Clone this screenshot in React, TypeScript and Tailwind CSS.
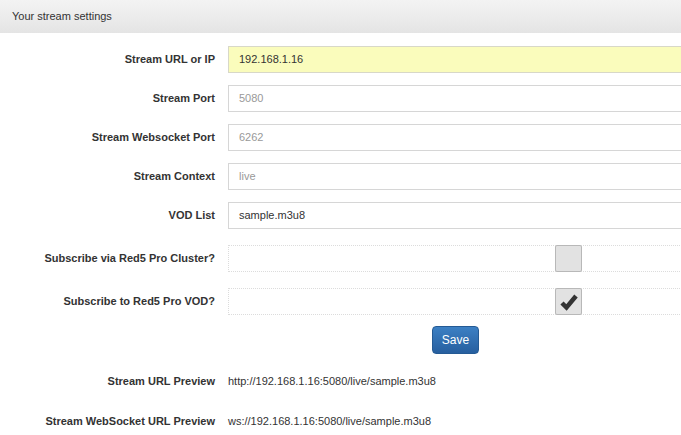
import React from "react";

const font = { fontFamily: '"Liberation Sans", Arial, sans-serif' };

function Label({ children }: { children: React.ReactNode }) {
  return (
    <div className="w-[215px] shrink-0 text-right text-[11px] font-bold text-[#333]">
      {children}
    </div>
  );
}

function InputRow({
  label,
  value,
  placeholder,
  yellow,
  mb,
}: {
  label: string;
  value?: string;
  placeholder?: string;
  yellow?: boolean;
  mb: string;
}) {
  return (
    <div className={`flex items-center gap-[13px] ${mb}`}>
      <Label>{label}</Label>
      <div
        className={`flex h-[27px] w-[460px] shrink-0 items-center border px-[10px] text-[11px] ${
          yellow ? "border-[#d8d8c8] bg-[#fafcbc]" : "border-[#d6d6d6] bg-white"
        } ${value ? "text-[#333]" : "text-[#999]"}`}
      >
        {value ?? placeholder}
      </div>
    </div>
  );
}

function CheckRow({ label, checked, mb }: { label: string; checked?: boolean; mb: string }) {
  return (
    <div className={`flex items-center gap-[13px] ${mb}`}>
      <Label>{label}</Label>
      <div className="flex h-[27px] w-[460px] shrink-0 items-center border border-dotted border-[#dcdcdc]">
        <div className="ml-[326px] flex h-[27px] w-[27px] items-center justify-center rounded-[2px] border border-[#b8b8b8] bg-[#e2e2e2]">
          {checked && (
            <svg width="22" height="22" viewBox="0 0 22 22">
              <polyline
                points="4,12 8.5,16.5 18,5"
                fill="none"
                stroke="#333"
                strokeWidth="4.5"
                strokeLinejoin="miter"
              />
            </svg>
          )}
        </div>
      </div>
    </div>
  );
}

function PreviewRow({ label, value, mb }: { label: string; value: string; mb: string }) {
  return (
    <div className={`flex h-[27px] items-center gap-[13px] ${mb}`}>
      <Label>{label}</Label>
      <div className="text-[11px] text-[#333]">{value}</div>
    </div>
  );
}

export default function App() {
  return (
    <div className="h-[435px] w-[681px] overflow-hidden bg-white" style={font}>
      <div className="flex h-[33px] items-center bg-gradient-to-b from-[#f3f3f3] via-[#ececec] to-[#e4e4e4] pl-[12px] text-[11px] text-[#333]">
        Your stream settings
      </div>
      <div className="pt-[13px]">
        <InputRow label="Stream URL or IP" value="192.168.1.16" yellow mb="mb-[12px]" />
        <InputRow label="Stream Port" placeholder="5080" mb="mb-[12px]" />
        <InputRow label="Stream Websocket Port" placeholder="6262" mb="mb-[12px]" />
        <InputRow label="Stream Context" placeholder="live" mb="mb-[12px]" />
        <InputRow label="VOD List" value="sample.m3u8" mb="mb-[16px]" />
        <CheckRow label="Subscribe via Red5 Pro Cluster?" mb="mb-[16px]" />
        <CheckRow label="Subscribe to Red5 Pro VOD?" checked mb="mb-[11px]" />
        <div className="mb-[14px] flex">
          <div className="w-[228px] shrink-0" />
          <div className="flex w-[455px] shrink-0 justify-center">
            <button className="h-[28px] w-[47px] rounded-[4px] border border-[#245a94] bg-gradient-to-b from-[#3c80c4] to-[#275f9f] text-[12px] text-white">
              Save
            </button>
          </div>
        </div>
        <PreviewRow
          label="Stream URL Preview"
          value="http://192.168.1.16:5080/live/sample.m3u8"
          mb="mb-[13px]"
        />
        <PreviewRow
          label="Stream WebSocket URL Preview"
          value="ws://192.168.1.16:5080/live/sample.m3u8"
          mb="mb-0"
        />
      </div>
    </div>
  );
}
